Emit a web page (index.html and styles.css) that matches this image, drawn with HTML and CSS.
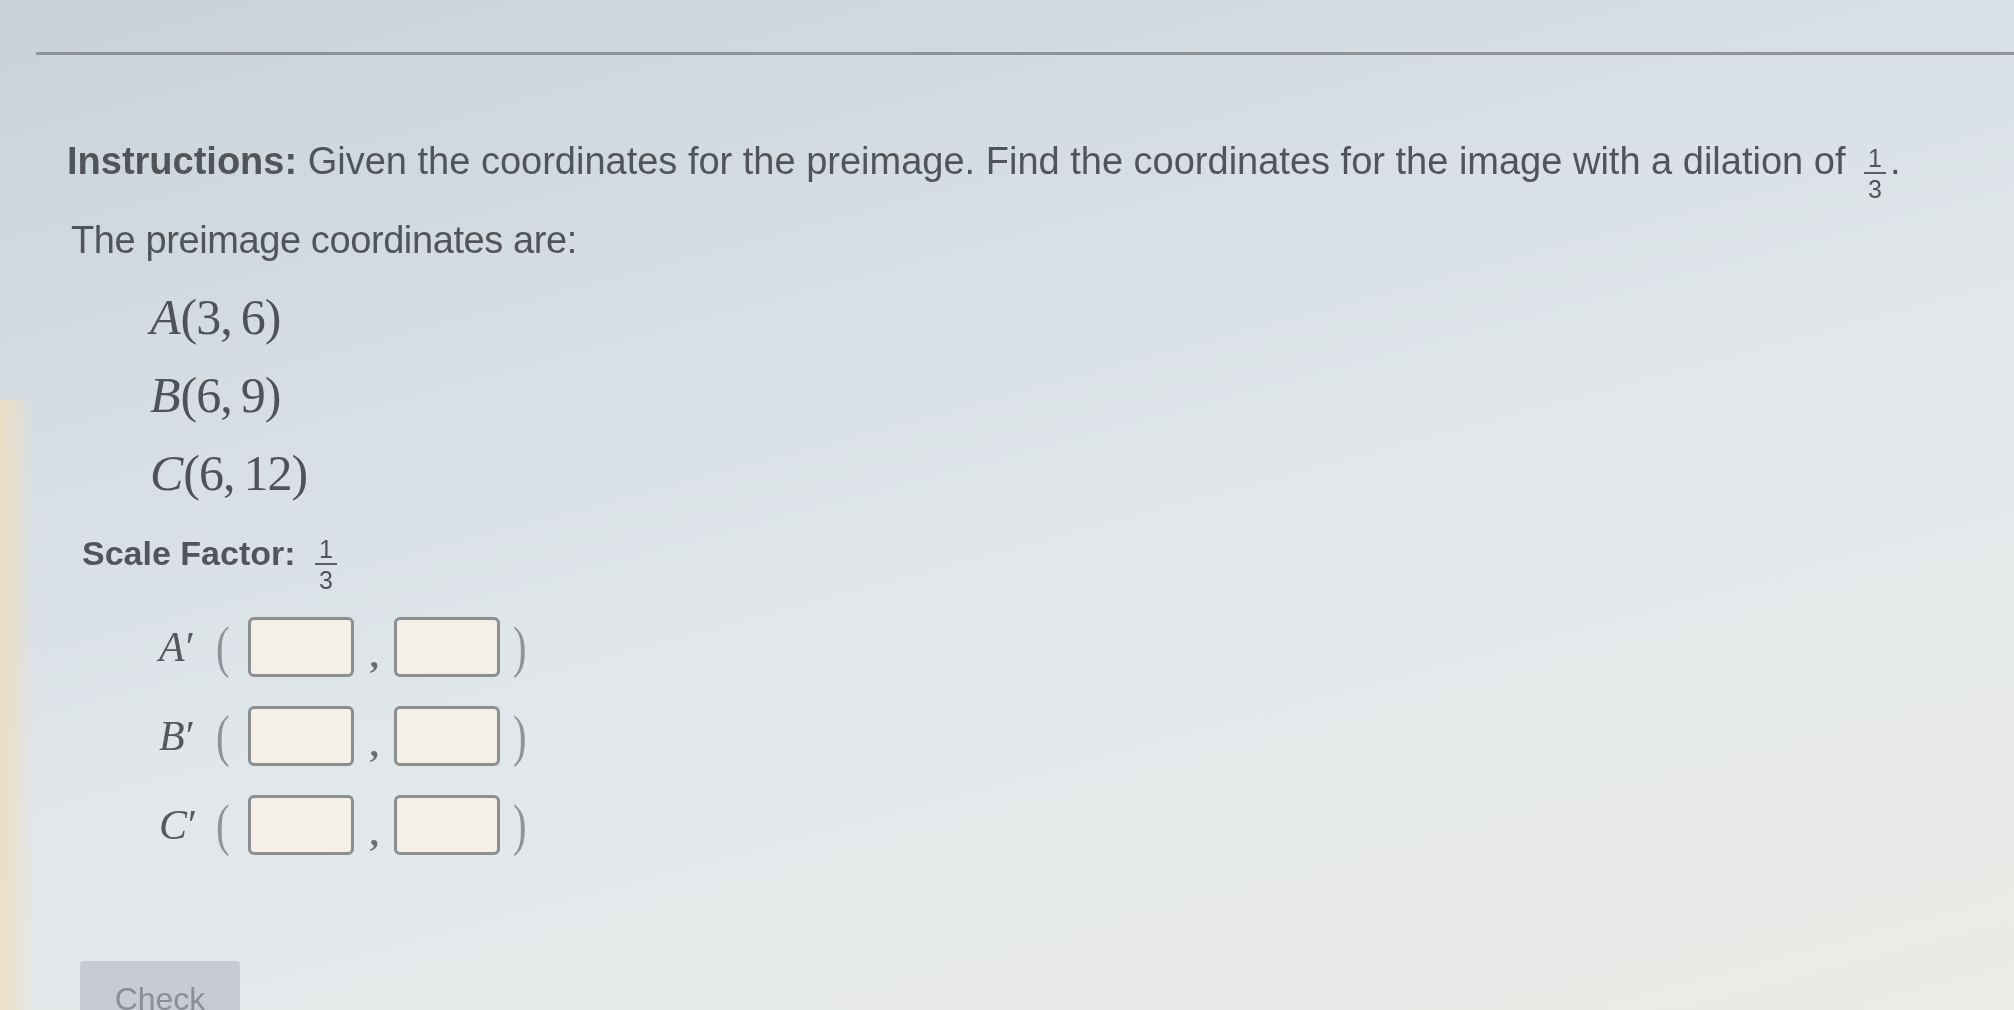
FILE: index.html
```html
<!DOCTYPE html>
<html lang="en">
<head>
<meta charset="utf-8">
<title>Dilation</title>
<link rel="stylesheet" href="styles.css">
</head>
<body>
<div class="page">
  <div class="rule"></div>
  <div class="content">
    <p class="instr"><b>Instructions:</b> Given the coordinates for the preimage. Find the coordinates for the image with a dilation of <span class="frac"><span class="num">1</span><span class="den">3</span></span>.</p>
    <p class="lead">The preimage coordinates are:</p>
    <div class="points">
      <div class="pt"><i>A</i>(3,&#8201;6)</div>
      <div class="pt"><i>B</i>(6,&#8201;9)</div>
      <div class="pt"><i>C</i>(6,&#8201;12)</div>
    </div>
    <p class="scale"><b>Scale Factor:</b> <span class="frac"><span class="num">1</span><span class="den">3</span></span></p>
    <div class="answers">
      <div class="ans"><span class="lbl"><i>A</i>&#8242;</span><span class="paren open">(</span><span class="box"></span><span class="comma">,</span><span class="box"></span><span class="paren close">)</span></div>
      <div class="ans"><span class="lbl"><i>B</i>&#8242;</span><span class="paren open">(</span><span class="box"></span><span class="comma">,</span><span class="box"></span><span class="paren close">)</span></div>
      <div class="ans"><span class="lbl"><i>C</i>&#8242;</span><span class="paren open">(</span><span class="box"></span><span class="comma">,</span><span class="box"></span><span class="paren close">)</span></div>
    </div>
    <button class="check" type="button">Check</button>
  </div>
</div>
</body>
</html>
```
FILE: styles.css
```css
html, body {
  margin: 0;
  padding: 0;
  height: 100%;
  overflow: hidden;
}
body {
  background:
    linear-gradient(90deg, rgba(238,220,192,0.9) 0, rgba(238,222,196,0.6) 14px, rgba(232,226,214,0) 34px) 0 400px / 40px 620px no-repeat,
    linear-gradient(165deg, #c8d2d9 0%, #d6dee4 30%, #e1e7ea 55%, #e7eaea 78%, #ecebe5 100%);
  font-family: "Liberation Sans", Arial, sans-serif;
  color: #515559;
}
.page {
  padding-top: 52px;
  filter: blur(0.6px);
}
.rule {
  margin-left: 36px;
  border-top: 3px solid #8e9398;
}
.content {
  padding-left: 67px;
}
.instr {
  margin: 84px 0 0;
  font-size: 38px;
  line-height: 44px;
}
.instr b, .scale b {
  font-weight: bold;
}
.frac {
  display: inline-flex;
  flex-direction: column;
  align-items: center;
  vertical-align: 7px;
  font-size: 25px;
  margin: 0 4px -40px 8px;
  letter-spacing: 0;
}
.num {
  border-bottom: 2px solid #5a5e62;
  padding: 0 4px;
  line-height: 28px;
}
.den {
  line-height: 30px;
}
.lead {
  margin: 35px 0 0 4px;
  font-size: 38px;
  line-height: 44px;
  letter-spacing: -0.4px;
}
.points {
  margin: 27px 0 0 83px;
  font-family: "Liberation Serif", "Times New Roman", serif;
  font-size: 50px;
  letter-spacing: -1px;
  color: #4f5357;
}
.pt {
  height: 78px;
  line-height: 56px;
}
.pt i {
  margin-right: 1px;
}
.scale {
  margin: 9px 0 0 15px;
  font-size: 34px;
  line-height: 42px;
}
.scale .frac {
  vertical-align: 7px;
  margin-left: 10px;
}
.answers {
  margin: 43px 0 0 92px;
}
.ans {
  display: flex;
  align-items: center;
  height: 60px;
  margin-bottom: 29px;
  font-family: "Liberation Serif", "Times New Roman", serif;
}
.lbl {
  width: 54px;
  font-size: 42px;
  color: #55595d;
}
.lbl i {
  margin-right: 1px;
}
.paren {
  font-size: 58px;
  color: #909498;
  transform: scaleX(0.7);
  line-height: 60px;
}
.paren.open {
  margin-right: 16px;
}
.paren.close {
  margin-left: 10px;
}
.box {
  width: 100px;
  height: 54px;
  border: 3px solid #8c8f92;
  border-radius: 6px;
  background: #f4f0e7;
}
.comma {
  width: 40px;
  text-align: center;
  font-size: 36px;
  font-weight: bold;
  color: #6a6e72;
  align-self: flex-end;
  line-height: 44px;
}
.check {
  display: block;
  margin-top: 106px;
  margin-left: 13px;
  width: 160px;
  height: 70px;
  border: none;
  border-radius: 3px;
  background: #c8cbd6;
  color: #8a8e95;
  font-family: "Liberation Sans", Arial, sans-serif;
  font-size: 32px;
  padding: 0;
  padding-top: 6px;
}
```
